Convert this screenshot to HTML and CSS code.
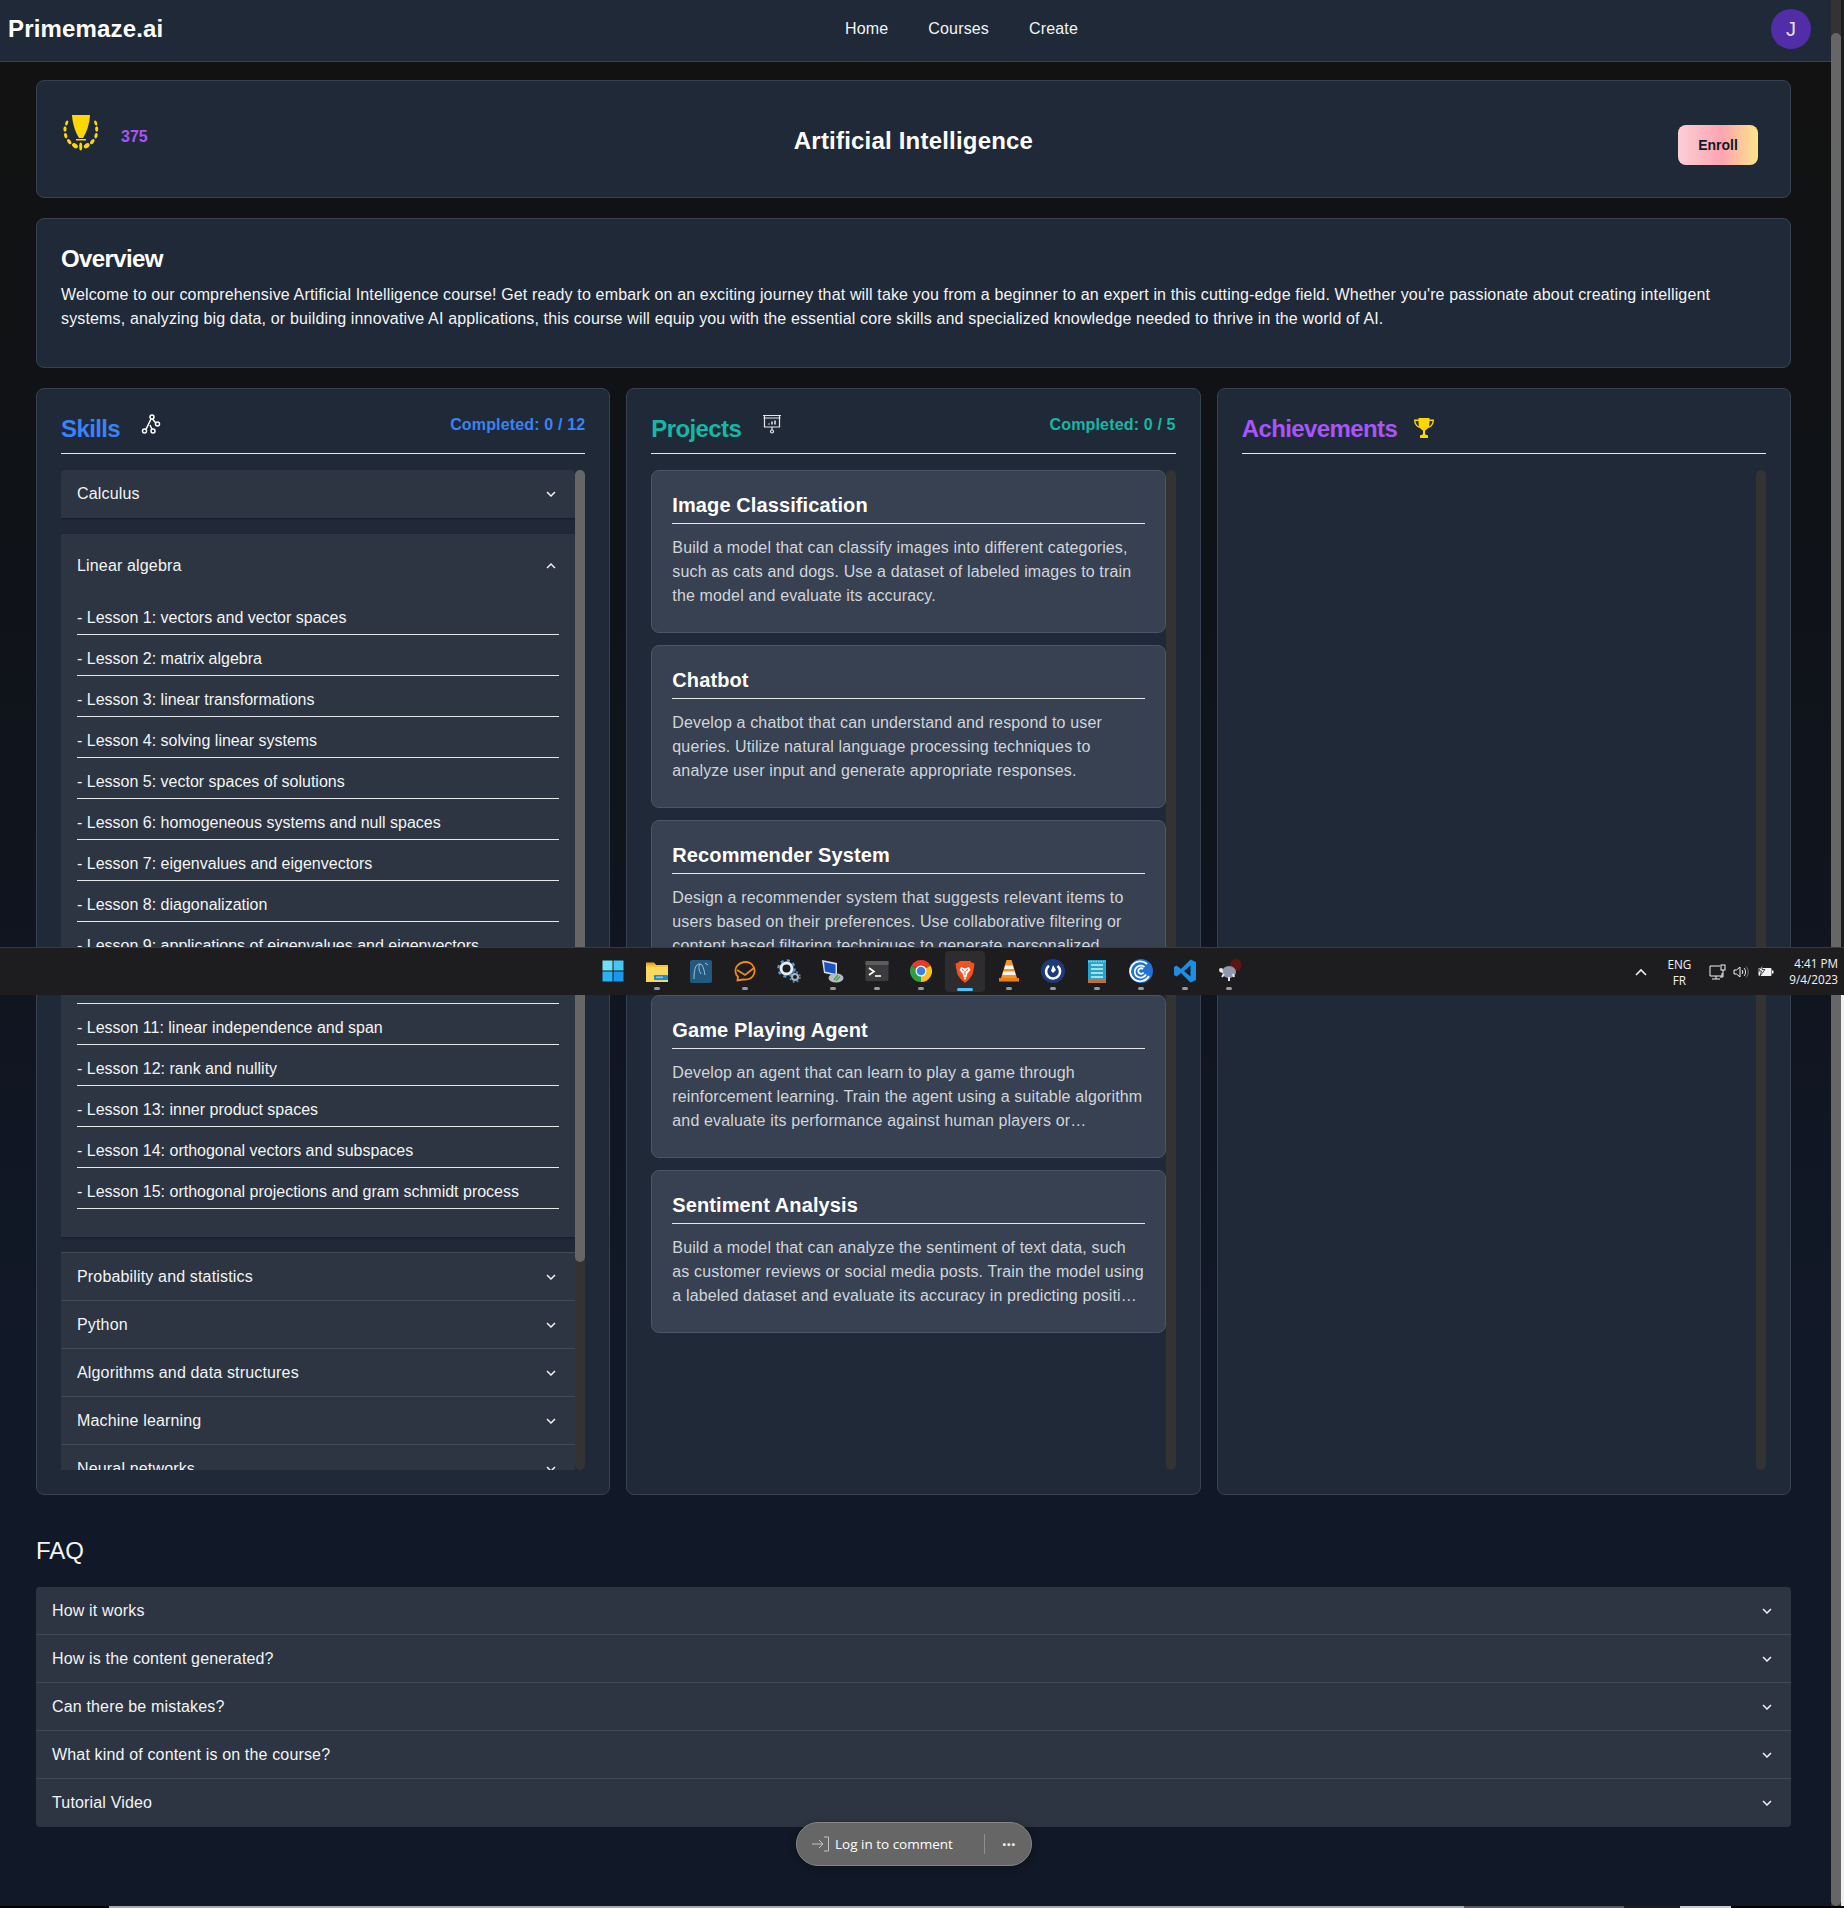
FILE: index.html
```html
<!DOCTYPE html>
<html lang="en">

<head>
	<title>Primemaze.ai > Artificial Intelligence</title>
	<meta charset="utf-8">
	<link rel="stylesheet" href="styles.css">
</head>

<body>
	<svg class="defs" width="0" height="0">
		<symbol id="chev" viewBox="0 0 24 24">
			<path d="M16.59 8.59 12 13.17 7.41 8.59 6 10l6 6 6-6z" fill="currentColor" />
		</symbol>
	</svg>

	<div class="window">
		<div class="page">
			<nav class="nav">
				<div class="brand">Primemaze.ai</div>
				<div class="nav-links">
					<a>Home</a>
					<a>Courses</a>
					<a>Create</a>
				</div>
				<div class="avatar">J</div>
			</nav>

			<main class="main">
				<section class="card course-head">
					<div class="points">
						<svg class="laurel" viewBox="0 0 38 38" fill="#ffd700">
							<path d="M10 0H28C27.500 10 24 18 21 23H17C14 18 10.500 10 10 0Z" />
							<rect x="14" y="24" width="10" height="1.500" />
							<ellipse cx="4.700" cy="8" rx="1.400" ry="2.600" transform="rotate(20 4.700 8)" />
							<ellipse cx="3" cy="14" rx="1.600" ry="2.800" />
							<ellipse cx="3.700" cy="20.700" rx="1.600" ry="2.800" transform="rotate(-15 3.700 20.700)" />
							<ellipse cx="7.300" cy="26.700" rx="1.700" ry="2.900" transform="rotate(-35 7.300 26.700)" />
							<ellipse cx="13" cy="30.700" rx="2.200" ry="3.200" transform="rotate(-55 13 30.700)" />
							<ellipse cx="18.700" cy="31.500" rx="1.500" ry="4" />
							<ellipse cx="24.700" cy="30.700" rx="2.200" ry="3.200" transform="rotate(55 24.700 30.700)" />
							<ellipse cx="30.300" cy="26.700" rx="1.700" ry="2.900" transform="rotate(35 30.300 26.700)" />
							<ellipse cx="34" cy="20.700" rx="1.600" ry="2.800" transform="rotate(15 34 20.700)" />
							<ellipse cx="34.700" cy="14" rx="1.600" ry="2.800" />
							<ellipse cx="33.700" cy="8" rx="1.400" ry="2.600" transform="rotate(-20 33.700 8)" />
						</svg>
						<span class="score">375</span>
					</div>
					<h1>Artificial Intelligence</h1>
					<button class="enroll">Enroll</button>
				</section>

				<section class="card overview">
					<h2>Overview</h2>
					<p>Welcome to our comprehensive Artificial Intelligence course! Get ready to embark on an exciting journey that will take you from a beginner to an expert in this cutting-edge field. Whether you're passionate about creating intelligent systems, analyzing big data, or building innovative AI applications, this course will equip you with the essential core skills and specialized knowledge needed to thrive in the world of AI.</p>
				</section>

				<div class="columns">
					<section class="card column">
						<header class="col-head blue">
							<h2>Skills</h2>
							<svg class="col-icon" viewBox="0 0 20 20" fill="none" stroke="#fff" stroke-width="1.500">
								<circle cx="11" cy="3" r="2" />
								<circle cx="16.500" cy="10" r="2" />
								<circle cx="3.500" cy="17" r="2" />
								<circle cx="12" cy="17" r="2" />
								<path d="M10 5 5 15.300M11.500 5 14.800 9M9 11l2 4.200" />
							</svg>
							<span class="done">Completed: 0 / 12</span>
						</header>
						<div class="pane">
							<div class="scroller">
								<div class="acc first">Calculus<svg class="chev"><use href="#chev" /></svg></div>

								<div class="acc-open">
									<div class="acc-open-head">Linear algebra<svg class="chev up"><use href="#chev" /></svg></div>
									<ul class="lessons">
										<li>- Lesson 1: vectors and vector spaces</li>
										<li>- Lesson 2: matrix algebra</li>
										<li>- Lesson 3: linear transformations</li>
										<li>- Lesson 4: solving linear systems</li>
										<li>- Lesson 5: vector spaces of solutions</li>
										<li>- Lesson 6: homogeneous systems and null spaces</li>
										<li>- Lesson 7: eigenvalues and eigenvectors</li>
										<li>- Lesson 8: diagonalization</li>
										<li>- Lesson 9: applications of eigenvalues and eigenvectors</li>
										<li>- Lesson 10: determinants</li>
										<li>- Lesson 11: linear independence and span</li>
										<li>- Lesson 12: rank and nullity</li>
										<li>- Lesson 13: inner product spaces</li>
										<li>- Lesson 14: orthogonal vectors and subspaces</li>
										<li>- Lesson 15: orthogonal projections and gram schmidt process</li>
									</ul>
								</div>

								<div class="acc after-open">Probability and statistics<svg class="chev"><use href="#chev" /></svg></div>
								<div class="acc">Python<svg class="chev"><use href="#chev" /></svg></div>
								<div class="acc">Algorithms and data structures<svg class="chev"><use href="#chev" /></svg></div>
								<div class="acc">Machine learning<svg class="chev"><use href="#chev" /></svg></div>
								<div class="acc">Neural networks<svg class="chev"><use href="#chev" /></svg></div>
							</div>
							<div class="bar"><div class="bar-thumb"></div></div>
						</div>
					</section>

					<section class="card column">
						<header class="col-head teal">
							<h2>Projects</h2>
							<svg class="col-icon" viewBox="0 0 20 20" fill="none" stroke="#e5e7eb" stroke-width="1.200">
								<path d="M1 1.500H19M2.500 1.500V13H17.500V1.500M1.500 4H18.500M10 13V16" />
								<circle cx="10" cy="17.500" r="1.500" />
								<path d="M7 10.500V9.500M10 10.500V7.500M13 10.500V6.500" stroke-width="1.500" />
							</svg>
							<span class="done">Completed: 0 / 5</span>
						</header>
						<div class="pane">
							<div class="scroller projects">
								<article class="project">
									<h3>Image Classification</h3>
									<p>Build a model that can classify images into different categories, such as cats and dogs. Use a dataset of labeled images to train the model and evaluate its accuracy.</p>
								</article>
								<article class="project">
									<h3>Chatbot</h3>
									<p>Develop a chatbot that can understand and respond to user queries. Utilize natural language processing techniques to analyze user input and generate appropriate responses.</p>
								</article>
								<article class="project">
									<h3>Recommender System</h3>
									<p>Design a recommender system that suggests relevant items to users based on their preferences. Use collaborative filtering or content based filtering techniques to generate personalized recommendations for each user of the system.</p>
								</article>
								<article class="project">
									<h3>Game Playing Agent</h3>
									<p>Develop an agent that can learn to play a game through reinforcement learning. Train the agent using a suitable algorithm and evaluate its performance against human players or…</p>
								</article>
								<article class="project">
									<h3>Sentiment Analysis</h3>
									<p>Build a model that can analyze the sentiment of text data, such as customer reviews or social media posts. Train the model using a labeled dataset and evaluate its accuracy in predicting positive or negative sentiment.</p>
								</article>
							</div>
							<div class="bar"></div>
						</div>
					</section>

					<section class="card column">
						<header class="col-head purple">
							<h2>Achievements</h2>
							<svg class="col-icon cup" viewBox="0 0 20 20" fill="#ffd700">
								<path d="M4.500 0H15.500V1.500H20C20 6 18 9 14 10 13 11.500 11.500 12.300 11 12.500V15.500C11 16.500 12.500 17 14 17.500V20H6V17.500C7.500 17 9 16.500 9 15.500V12.500C8.500 12.300 7 11.500 6 10 2 9 0 6 0 1.500H4.500ZM1.500 3C1.700 5.500 3 7.500 5 8.300 4.700 7 4.500 5 4.500 3ZM18.500 3H15.500C15.500 5 15.300 7 15 8.300 17 7.500 18.300 5.500 18.500 3Z" fill-rule="evenodd" />
							</svg>
						</header>
						<div class="pane">
							<div class="scroller"></div>
							<div class="bar"></div>
						</div>
					</section>
				</div>

				<h2 class="faq-title">FAQ</h2>
				<div class="faq">
					<div class="faq-row">How it works<svg class="chev"><use href="#chev" /></svg></div>
					<div class="faq-row">How is the content generated?<svg class="chev"><use href="#chev" /></svg></div>
					<div class="faq-row">Can there be mistakes?<svg class="chev"><use href="#chev" /></svg></div>
					<div class="faq-row">What kind of content is on the course?<svg class="chev"><use href="#chev" /></svg></div>
					<div class="faq-row">Tutorial Video<svg class="chev"><use href="#chev" /></svg></div>
				</div>
			</main>
		</div>

		<div class="rail"><div class="thumb"></div></div>
		<div class="behind"></div>
	</div>
	<div class="strip"></div>

	<!-- floating comment pill -->
	<div class="pill">
		<svg class="pill-icon" width="18" height="16" viewBox="0 0 18 16" fill="none" stroke="#c4c4c4" stroke-width="1">
			<path d="M0 8H11M7 4l4 4-4 4M12 1H16.500V15H12" />
		</svg>
		<span class="pill-text">Log in to comment</span>
		<span class="pill-sep"></span>
		<span class="pill-more">···</span>
	</div>

	<!-- windows taskbar over the page -->
	<div class="taskbar">
		<div class="task-icons">
			<div class="task">
				<svg viewBox="0 0 24 24">
					<path d="M1.500 1.500h10v10h-10z" fill="#6fe0fb" />
					<path d="M12.500 1.500h10v10h-10z" fill="#43c7f7" />
					<path d="M1.500 12.500h10v10h-10z" fill="#2bb0f5" />
					<path d="M12.500 12.500h10v10h-10z" fill="#1797ee" />
				</svg>
			</div>
			<div class="task on">
				<svg viewBox="0 0 24 24">
					<path d="M1 4h8l2 2h12v17H1z" fill="#f3c53f" />
					<path d="M1 3.500h8l2 2.500H1z" fill="#e3a826" />
					<path d="M1 8h22v15H1z" fill="#fbd75c" />
					<rect x="9" y="16" width="14" height="5" rx="1" fill="#1a8ad6" />
					<rect x="11" y="17.500" width="7" height="1.600" fill="#7ccaf5" />
				</svg>
			</div>
			<div class="task">
				<svg viewBox="0 0 24 24">
					<rect x="1" y="1" width="22" height="23" rx="2" fill="#24597f" />
					<path d="M5 20C5 12 6 5 11 5c3 0 4 6 5 11M16 4l3 2M11 5c-2 3-1 7 1 10" fill="none" stroke="#9cc4dc" stroke-width="1" />
				</svg>
			</div>
			<div class="task on">
				<svg viewBox="0 0 24 24" fill="none" stroke="#f28a12" stroke-width="1.800">
					<path d="M5 18C2 15 1.500 10 4 7c3-4 9-5 13-3 4 2 5.500 7 4 11-1.500 4-6 6-11 5.500L4.500 21.500Z" />
					<path d="M4 11l8 5 9-7" />
				</svg>
			</div>
			<div class="task">
				<svg viewBox="0 0 24 24" fill="none">
					<circle cx="9.500" cy="9.500" r="5.500" stroke="#e6edf3" stroke-width="3" />
					<circle cx="9.500" cy="9.500" r="8" stroke="#5d9bd1" stroke-width="2.500" stroke-dasharray="3 3.300" />
					<circle cx="18" cy="18" r="3" stroke="#9fb8cc" stroke-width="2" />
					<circle cx="18" cy="18" r="5" stroke="#5f86a6" stroke-width="1.500" stroke-dasharray="2 2" />
				</svg>
			</div>
			<div class="task on">
				<svg viewBox="0 0 24 24">
					<path d="M1 1l15 3v13L3 14z" fill="#d8dde6" />
					<path d="M3 3l11.500 2.500v9.500L4 12.500z" fill="#1c52c4" />
					<ellipse cx="15" cy="19" rx="7.500" ry="4.500" fill="#b8bcc2" />
					<path d="M13 21l4-5M15 21.500l4-4" stroke="#3fa34d" stroke-width="1.300" />
				</svg>
			</div>
			<div class="task on">
				<svg viewBox="0 0 24 24">
					<rect x="0.500" y="2" width="23" height="20" rx="1.500" fill="#3c3c3c" />
					<rect x="0.500" y="2" width="23" height="4" fill="#5c5c5c" />
					<path d="M4 9l5 3.500L4 16" fill="none" stroke="#fff" stroke-width="1.600" />
					<path d="M10 17h6" stroke="#fff" stroke-width="1.600" />
				</svg>
			</div>
			<div class="task on">
				<svg viewBox="0 0 24 24">
					<path d="M12 12 2.470 6.500A11 11 0 0 1 21.530 6.500Z" fill="#e33b2e" />
					<path d="M12 12 21.530 6.500A11 11 0 0 1 12 23Z" fill="#fbc116" />
					<path d="M12 12 12 23A11 11 0 0 1 2.470 6.500Z" fill="#2f9e44" />
					<circle cx="12" cy="12" r="5.500" fill="#fff" />
					<circle cx="12" cy="12" r="4.300" fill="#3b82e8" />
				</svg>
			</div>
			<div class="task active">
				<svg viewBox="0 0 24 24">
					<path d="M7 1h10l2.500 2 2 .5-.5 4-1.500 7-3.500 5L12 23l-4-3.500-3.500-5L3 7.500l-.5-4 2-.5z" fill="#f4511e" />
					<path d="M8 7l4 1.500L16 7l1.500 3-3 3.500-1 3.500h-3l-1-3.500-3-3.500z" fill="#fff" />
					<path d="M9 9.500l2 1M15 9.500l-2 1M12 11v4" stroke="#f4511e" stroke-width="1" />
					<path d="M10.500 17.500h3L12 20z" fill="#fff" />
				</svg>
			</div>
			<div class="task on">
				<svg viewBox="0 0 24 24">
					<path d="M9.500 1h5L20 19H4z" fill="#f59324" />
					<path d="M8.200 6.500h7.600l1 3.500H7.200zM6.300 12.500h11.400l1 3.500H5.300z" fill="#f5f5f5" />
					<path d="M2 19h20v3.500H2z" fill="#e8801a" />
				</svg>
			</div>
			<div class="task on">
				<svg viewBox="0 0 24 24">
					<circle cx="12" cy="12" r="12" fill="#1e3a7a" />
					<path d="M8 6.800a7 7 0 1 0 8.500.300" fill="none" stroke="#fff" stroke-width="2.600" />
					<path d="M12 6l3 5-3 3-2-2z" fill="#fff" />
				</svg>
			</div>
			<div class="task on">
				<svg viewBox="0 0 24 24">
					<rect x="3" y="1" width="18" height="23" fill="#26a5c9" />
					<rect x="3" y="21" width="18" height="3" fill="#c96b2c" />
					<path d="M6 6h12M6 10h12M6 14h12M6 18h12" stroke="#cfeef7" stroke-width="1.500" />
					<path d="M3 2.500h18" stroke="#7fd3ea" stroke-width="1.500" stroke-dasharray="1.500 1" />
				</svg>
			</div>
			<div class="task on">
				<svg viewBox="0 0 24 24" fill="none">
					<circle cx="12" cy="12" r="12" fill="#1f73d6" />
					<path d="M20 17a10 10 0 1 1-2-12" stroke="#fff" stroke-width="1.800" />
					<path d="M17 15.500a6 6 0 1 1-1.500-7.500" stroke="#fff" stroke-width="1.800" />
					<path d="M14.500 13.500a2.800 2.800 0 1 1-.5-3.500" stroke="#fff" stroke-width="1.800" />
				</svg>
			</div>
			<div class="task on">
				<svg viewBox="0 0 24 24">
					<path d="M17.500 0.500 8 10 3.500 6.500 1 8v8l2.500 1.500L8 14l9.500 9.500L23 21V3ZM17.500 6.500v11L11 12Z" fill="#1a8fe3" fill-rule="evenodd" />
				</svg>
			</div>
			<div class="task on">
				<svg viewBox="0 0 24 24">
					<circle cx="19" cy="6" r="6" fill="#5c1414" />
					<ellipse cx="12" cy="13" rx="7" ry="6" fill="#8e99ad" />
					<path d="M3 12l3 1M5 18l2-3M17 18l-1-3M12 22v-4" stroke="#e8e8e8" stroke-width="2" />
					<circle cx="4" cy="11" r="2" fill="#e8e8e8" />
				</svg>
			</div>
		</div>

		<div class="tray">
			<svg class="tray-up" width="12" height="8" viewBox="0 0 12 8" fill="none" stroke="#eee" stroke-width="1.600">
				<path d="M1 7l5-5 5 5" />
			</svg>
			<div class="lang">ENG<br>FR</div>
			<svg class="tray-net" width="17" height="16" viewBox="0 0 17 16" fill="none" stroke="#f2f2f2" stroke-width="1">
				<path d="M11 2H1v10h12V9M7 12v3M3 15h8" />
				<rect x="12" y="1" width="4" height="5" />
				<path d="M14 6v7h-3" />
			</svg>
			<svg class="tray-vol" width="16" height="14" viewBox="0 0 16 14" fill="none" stroke="#f2f2f2" stroke-width="1">
				<path d="M1 5v4h2.500L7 12V2L3.500 5zM9 5c1 1 1 3 0 4M11 3c2 2 2 6 0 8" />
				<path d="M13 1.500c3 3 3 8 0 11" stroke="#777" />
			</svg>
			<svg class="tray-bat" width="17" height="13" viewBox="0 0 17 13">
				<rect x="1.500" y="3" width="13" height="8" rx="1" fill="#f2f2f2" />
				<rect x="15" y="5.500" width="1.500" height="3" fill="#f2f2f2" />
				<path d="M5.500 0 1.500 6h3L3 11 8 4.500H5z" fill="#f2f2f2" stroke="#1d1d20" stroke-width="0.800" />
			</svg>
			<div class="clock">4:41 PM<br>9/4/2023</div>
		</div>
	</div>
</body>

</html>
```

FILE: styles.css
```css
* {
	box-sizing: border-box;
}

body {
	margin: 0;
	height: 1908px;
	overflow: hidden;
	position: relative;
	font-family: "Liberation Sans", Arial, sans-serif;
	font-size: 16px;
	line-height: 24px;
	letter-spacing: 0.16px;
	color: #f3f4f6;
	background: #000;
}

.defs {
	position: absolute;
}

h1,
h2,
h3,
p,
ul {
	margin: 0;
	padding: 0;
}

.window {
	display: flex;
	height: 1906px;
}

.page {
	flex: 1;
	min-width: 0;
	background: linear-gradient(#121212 6%, #0f1218 30%, #111827 70%);
}

.rail {
	width: 10px;
	padding-top: 33px;
	background: #333;
}

.thumb {
	height: 100%;
	border-radius: 5px;
	background: #666;
}

.behind {
	width: 3px;
	background: linear-gradient(#1c1c1c 995px, #f0f0f0 995px);
}

.strip {
	height: 2px;
	background: linear-gradient(90deg, #000 109px, #aaa 109px, #aaa 1464px, #5a5560 1464px, #5a5560 1624px, #1c1c1c 1624px, #1c1c1c 1680px, #ccc 1680px, #ccc 1731px, #000 1731px);
}

/* top bar */
.nav {
	display: flex;
	align-items: center;
	height: 62px;
	padding: 0 20px 4px 8px;
	background: #1f2937;
	border-bottom: 1px solid #374151;
}

.brand {
	flex: 0 0 837px;
	font-size: 24px;
	font-weight: bold;
	color: #fff;
}

.nav-links {
	display: flex;
	gap: 40px;
	color: #f3f4f6;
}

.avatar {
	width: 40px;
	height: 40px;
	margin-left: auto;
	display: flex;
	align-items: center;
	justify-content: center;
	border-radius: 50%;
	background: #512da8;
	color: #e6e0f2;
	font-size: 20px;
}

.main {
	padding: 18px 40px 0 36px;
}

.card {
	background: #1f2937;
	border: 1px solid #374151;
	border-radius: 8px;
}

h2 {
	font-size: 24px;
	line-height: 32px;
	font-weight: bold;
	letter-spacing: -0.6px;
}

/* course header */
.course-head {
	display: grid;
	grid-template-columns: 1fr auto 1fr;
	align-items: center;
	height: 118px;
	padding: 0 32px;
}

.points {
	display: flex;
	align-items: center;
	gap: 21px;
	margin: -10px 0 0 -7px;
}

.laurel {
	width: 38px;
	height: 38px;
}

.score {
	margin-top: 6px;
	color: #a855f7;
	font-weight: bold;
	letter-spacing: 0;
}

h1 {
	margin-top: 3px;
	font-size: 24px;
	line-height: 32px;
	letter-spacing: 0.2px;
	color: #fff;
}

.enroll {
	justify-self: end;
	width: 80px;
	height: 40px;
	margin-top: 12px;
	border: 0;
	border-radius: 8px;
	font-family: inherit;
	font-size: 14px;
	font-weight: bold;
	color: #111827;
	background: linear-gradient(90deg, #fbcfd8, #fda4af 55%, #fde68a);
}

.overview {
	height: 150px;
	margin-top: 20px;
	padding: 24px;
}

.overview h2 {
	color: #fff;
	margin-bottom: 8px;
}

.overview p {
	letter-spacing: 0.15px;
}

/* three columns */
.columns {
	display: grid;
	grid-template-columns: repeat(3, 1fr);
	gap: 16px;
	margin-top: 20px;
}

.column {
	padding: 24px;
	height: 1107px;
}

.col-head {
	display: flex;
	align-items: flex-start;
	height: 41px;
	margin-bottom: 16px;
	border-bottom: 1px solid #e5e7eb;
}

.blue {
	color: #3b82f6;
}

.teal {
	color: #14b8a6;
}

.purple {
	color: #a855f7;
}

.col-icon {
	width: 20px;
	height: 20px;
	margin: 1px 0 0 21px;
}

.col-icon.cup {
	margin: 5px 0 0 17px;
}

.done {
	margin-left: auto;
	font-weight: bold;
}

.pane {
	display: flex;
	height: 1000px;
}

.scroller {
	flex: 1;
	min-width: 0;
	overflow: hidden;
}

.bar {
	flex: none;
	width: 10px;
	background: #333;
	border-radius: 5px;
}

.bar-thumb {
	height: 792px;
	background: #666;
	border-radius: 5px;
}

/* accordions */
.acc,
.faq-row {
	display: flex;
	align-items: center;
	justify-content: space-between;
	height: 48px;
	padding: 0 16px;
	background: #2c3541;
	border-top: 1px solid #414a57;
}

.acc.first {
	border-top: 0;
	border-radius: 4px 4px 0 0;
	box-shadow: 0 1px 2px rgba(0, 0, 0, 0.35);
}

.acc.after-open {
	margin-top: 15px;
}

.chev {
	flex: none;
	width: 18px;
	height: 18px;
	margin-right: -1px;
}

.chev.up {
	transform: rotate(180deg);
}

.acc-open {
	height: 703px;
	margin-top: 16px;
	padding: 0 16px;
	background: #2c3541;
	box-shadow: 0 1px 2px rgba(0, 0, 0, 0.35);
}

.acc-open-head {
	display: flex;
	align-items: center;
	justify-content: space-between;
	height: 64px;
}

.lessons {
	margin-top: -4px;
	list-style: none;
	letter-spacing: 0;
}

.lessons li {
	padding: 12px 0 4px;
	border-bottom: 1px solid #e5e7eb;
}

/* project cards */
.projects {
	display: flex;
	flex-direction: column;
	gap: 12px;
}

.project {
	flex: none;
	height: 163px;
	padding: 20px;
	background: #374151;
	border: 1px solid #4b5563;
	border-radius: 8px;
}

.project h3 {
	padding-bottom: 4px;
	font-size: 20px;
	line-height: 28px;
	letter-spacing: 0.1px;
	color: #fff;
	border-bottom: 1px solid #e5e7eb;
}

.project p {
	margin-top: 12px;
	letter-spacing: 0.14px;
	color: #d1d5db;
	display: -webkit-box;
	-webkit-line-clamp: 3;
	-webkit-box-orient: vertical;
	overflow: hidden;
}

/* faq */
.faq-title {
	margin: 40px 0 20px;
	font-weight: normal;
	letter-spacing: 0;
}

.faq {
	border-radius: 4px;
	overflow: hidden;
}

.faq-row:first-child {
	height: 47px;
	border-top: 0;
}

.faq-row:last-child {
	height: 49px;
}

/* comment pill */
.pill {
	position: absolute;
	left: 796px;
	top: 1822px;
	display: flex;
	align-items: center;
	width: 236px;
	height: 44px;
	padding-left: 15px;
	border: 1px solid #858585;
	border-radius: 22px;
	background: #666;
	box-shadow: 0 2px 8px rgba(0, 0, 0, 0.3);
	font-family: "Open Sans", "Noto Sans", sans-serif;
	font-size: 13.5px;
	letter-spacing: 0;
	color: #fff;
}

.pill-text {
	margin-left: 5px;
}

.pill-sep {
	width: 1px;
	height: 20px;
	margin-left: 31px;
	background: #8f8f8f;
}

.pill-more {
	margin-left: 17px;
	font-size: 16px;
	font-weight: bold;
	color: #eee;
}

/* taskbar */
.taskbar {
	position: absolute;
	left: 0;
	right: 0;
	top: 947px;
	display: flex;
	height: 48px;
	background: #1d1d20;
	border-top: 1px solid #3a3a3c;
}

.task-icons {
	display: flex;
	margin-left: 591px;
}

.task {
	position: relative;
	display: flex;
	align-items: center;
	justify-content: center;
	width: 44px;
	padding-bottom: 1px;
}

.task svg {
	width: 24px;
	height: 24px;
}

.task.on::after,
.task.active::after {
	content: "";
	position: absolute;
	left: 19px;
	bottom: 5px;
	width: 6px;
	height: 3px;
	border-radius: 2px;
	background: #9a9a9a;
}

.task.active {
	margin: 3px 2px;
	width: 40px;
	padding-bottom: 0;
	background: #2d2d30;
	border-radius: 4px;
}

.task.active::after {
	left: 12px;
	bottom: 1px;
	width: 16px;
	background: #4cc2ff;
}

.tray {
	display: flex;
	align-items: center;
	margin-left: auto;
	padding-right: 6px;
	font-family: "Open Sans", "Noto Sans", sans-serif;
	font-size: 11.7px;
	line-height: 16px;
	letter-spacing: 0;
	color: #f2f2f2;
}

.lang {
	width: 28px;
	margin-left: 18px;
	text-align: center;
}

.tray-net {
	margin-left: 16px;
}

.tray-vol {
	margin-left: 7px;
}

.tray-bat {
	margin-left: 8px;
}

.clock {
	margin: -2px 0 0 15px;
	text-align: right;
}
```
